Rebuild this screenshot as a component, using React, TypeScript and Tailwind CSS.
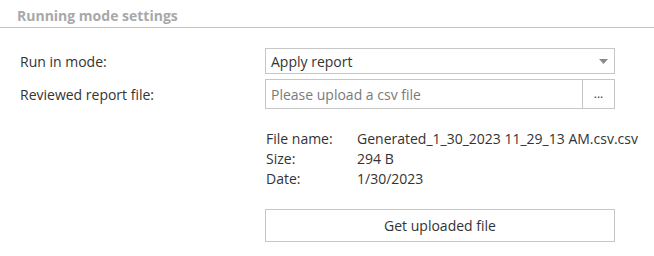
import React from "react";

function Row({ label, children }: { label: string; children: React.ReactNode }) {
  return (
    <>
      <div className="flex items-center text-[14px]">{label}</div>
      <div>{children}</div>
    </>
  );
}

export default function App() {
  const info = [
    ["File name:", "Generated_1_30_2023 11_29_13 AM.csv.csv"],
    ["Size:", "294 B"],
    ["Date:", "1/30/2023"],
  ];

  return (
    <div className="w-[654px] h-[256px] bg-white font-['Open_Sans',sans-serif] text-[#333] overflow-hidden">
      {/* section header */}
      <div className="h-[28px] border-b border-[#c4c4c4] pl-[17px] pt-[3px]">
        <span className="text-[14px] font-bold text-[#a8a8a8]">Running mode settings</span>
      </div>

      <div className="grid grid-cols-[245px_350px] gap-y-[5px] pl-[20px] pt-[20px]">
        <Row label="Run in mode:">
          <div className="flex h-[26px] items-center justify-between border border-[#c6c6c6] pl-[5px] pr-[5px] text-[14px]">
            <span>Apply report</span>
            <svg width="9" height="5" viewBox="0 0 9 5" className="mr-[1px]">
              <path d="M0 0h9L4.5 5z" fill="#8a8a8a" />
            </svg>
          </div>
        </Row>
        <Row label="Reviewed report file:">
          <div className="flex h-[30px] border border-[#c6c6c6] text-[14px]">
            <div className="flex flex-1 items-center pl-[5px] text-[#7a7a7a]">Please upload a csv file</div>
            <div className="flex w-[32px] items-center justify-center border-l border-[#c6c6c6] text-[12px] leading-none">...</div>
          </div>
        </Row>
      </div>

      <div className="ml-[265px] w-[350px] pt-[20px]">
        <div className="grid grid-cols-[91px_auto] pl-[1px] text-[14px] leading-[20px]">
          {info.map(([k, v]) => (
            <React.Fragment key={k}>
              <div>{k}</div>
              <div className="whitespace-nowrap">{v}</div>
            </React.Fragment>
          ))}
        </div>
        <button className="mt-[20px] h-[33px] w-full border border-[#c6c6c6] bg-white text-[14px] text-[#333]">
          Get uploaded file
        </button>
      </div>
    </div>
  );
}
